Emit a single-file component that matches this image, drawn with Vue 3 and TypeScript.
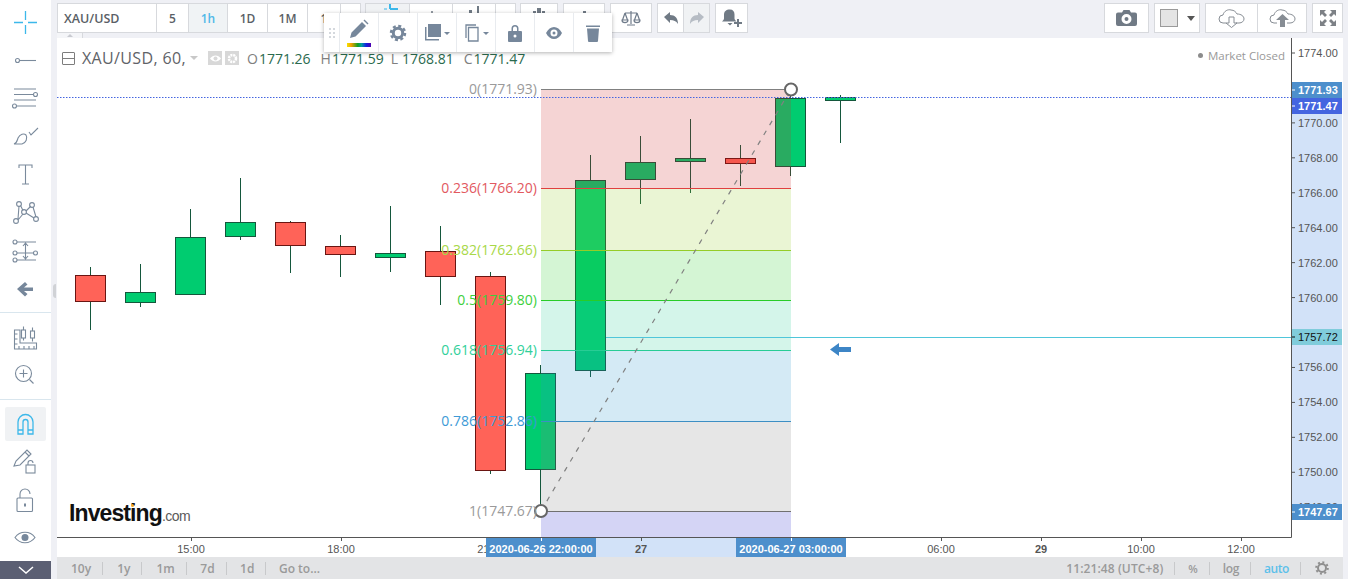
<script setup lang="ts">
interface Candle { x: number; top: number; bottom: number; hi: number; lo: number; up: boolean }
const candles: Candle[] = [
  { x: 90, top: 275, bottom: 301, hi: 267, lo: 330, up: false },
  { x: 140, top: 292, bottom: 302, hi: 264, lo: 307, up: true },
  { x: 190, top: 237, bottom: 294, hi: 209, lo: 295, up: true },
  { x: 240, top: 222, bottom: 236, hi: 178, lo: 240, up: true },
  { x: 290, top: 222, bottom: 245, hi: 221, lo: 273, up: false },
  { x: 340, top: 246, bottom: 254, hi: 235, lo: 277, up: false },
  { x: 390, top: 253, bottom: 257, hi: 206, lo: 272, up: true },
  { x: 440, top: 251, bottom: 276, hi: 226, lo: 305, up: false },
  { x: 490, top: 276, bottom: 470, hi: 272, lo: 474, up: false },
  { x: 540, top: 373, bottom: 469, hi: 365, lo: 505, up: true },
  { x: 590, top: 180, bottom: 370, hi: 155, lo: 377, up: true },
  { x: 640, top: 162, bottom: 179, hi: 136, lo: 204, up: true },
  { x: 690, top: 158, bottom: 161, hi: 119, lo: 193, up: true },
  { x: 740, top: 158, bottom: 163, hi: 145, lo: 186, up: false },
  { x: 790, top: 98, bottom: 166, hi: 91, lo: 176, up: true },
  { x: 840, top: 97, bottom: 100, hi: 95, lo: 143, up: true },
]
const bands = [
  { y: 89, h: 99, c: '#cc2828' },
  { y: 188, h: 62, c: '#95cc28' },
  { y: 250, h: 50, c: '#28cc28' },
  { y: 300, h: 50, c: '#28cc95' },
  { y: 350, h: 71, c: '#2895cc' },
  { y: 421, h: 90, c: '#808080' },
  { y: 511, h: 26, c: '#2828cc' },
]
const fibLevels = [
  { y: 89, line: '#808080', color: '#9a9a9a', text: '0(1771.93)' },
  { y: 188, line: '#e04040', color: '#e2595f', text: '0.236(1766.20)' },
  { y: 250, line: '#95cc28', color: '#a8d848', text: '0.382(1762.66)' },
  { y: 300, line: '#28cc28', color: '#3dd03d', text: '0.5(1759.80)' },
  { y: 350, line: '#28cc95', color: '#30d09a', text: '0.618(1756.94)' },
  { y: 421, line: '#3d8fc4', color: '#3d9ad6', text: '0.786(1752.86)' },
  { y: 511, line: '#707070', color: '#9a9a9a', text: '1(1747.67)' },
]
const priceTicks = [1774, 1772, 1770, 1768, 1766, 1764, 1762, 1760, 1758, 1756, 1754, 1752, 1750, 1748].map((p) => ({
  y: 53 + (1774 - p) * 17.47,
  text: p.toFixed(2),
}))
const timeTicks = [
  { x: 191, text: '15:00', bold: false },
  { x: 341, text: '18:00', bold: false },
  { x: 491, text: '21:00', bold: false },
  { x: 641, text: '27', bold: true },
  { x: 941, text: '06:00', bold: false },
  { x: 1041, text: '29', bold: true },
  { x: 1141, text: '10:00', bold: false },
  { x: 1241, text: '12:00', bold: false },
]
const priceTags = [
  { y: 82, h: 16, bg: '#4d8fcc', fg: '#fff', bold: true, text: '1771.93' },
  { y: 98, h: 16, bg: '#4465e0', fg: '#fff', bold: true, text: '1771.47' },
  { y: 329, h: 16, bg: '#80ccdb', fg: '#111', bold: false, text: '1757.72' },
  { y: 504, h: 16, bg: '#4d8fcc', fg: '#fff', bold: true, text: '1747.67' },
]
const ranges = ['10y', '1y', '1m', '7d', '1d']
const intervals = [
  { label: '5', w: 32, active: false },
  { label: '1h', w: 39, active: true },
  { label: '1D', w: 40, active: false },
  { label: '1M', w: 40, active: false },
  { label: '1', w: 33, active: false },
  { label: '', w: 19, active: false },
]
</script>

<template>
  <div class="app">
    <aside class="sidebar">
      <section class="tool-group">
        <svg class="tool cross" viewBox="0 0 51 38"><path d="M14 22.500h9M28 22.500h9M25.500 11v9M25.500 25v9" /></svg>
        <svg class="tool" viewBox="0 0 51 38"><circle cx="17.500" cy="22.500" r="2" /><path d="M20 22.500h16" /></svg>
        <svg class="tool" viewBox="0 0 51 38"><path d="M14 13h22M14 18.500h19M14 24h22M17 30h19" /><circle cx="35.500" cy="18.500" r="2" /><circle cx="14.500" cy="30" r="2" /></svg>
        <svg class="tool" viewBox="0 0 51 38"><path d="M14 30c3-1 3-3 4-6 2-4 6-5 8-3 2 3 0 8-4 9z M14 30h8M29 18l2 3 7-7" /></svg>
        <svg class="tool" viewBox="0 0 51 38"><path d="M19 16v-3h13v3M25.500 13v19M22 32h7" /></svg>
        <svg class="tool" viewBox="0 0 51 38"><circle cx="19" cy="14" r="2.400" /><circle cx="32" cy="15" r="2.400" /><circle cx="16" cy="31" r="2.400" /><circle cx="36" cy="29" r="2.400" /><circle cx="24" cy="22" r="2.400" /><path d="M18 29l1-13M20.500 15.500l2.500 5M26 21l5-5M33 17l3 10M18 30l5-6M26 23l8 5" /></svg>
        <svg class="tool" viewBox="0 0 51 38"><path d="M17 14h19M17 25h16M17 32h19M25.500 15v16M23 18l2.500-3 2.500 3M23 28l2.500 3 2.500-3" /><circle cx="15" cy="14" r="2" /><circle cx="15" cy="25" r="2" /><circle cx="15" cy="32" r="2" /><circle cx="35.500" cy="25" r="2" /></svg>
        <svg class="tool" viewBox="0 0 51 38"><path class="solid" d="M17 23l8-7 2.500 2.500-3.500 3h9v3.500h-9l3.500 3-2.500 2.500z" /></svg>
      </section>
      <section class="tool-group ruled first-rule">
        <svg class="tool" viewBox="0 0 51 38"><path d="M14.500 12v19h22v-6H20V12zM19 31v-3M24 31v-3M29 31v-3M34 31v-3M14.500 26h3M14.500 21h3M14.500 16h3" /><rect x="21.500" y="12" width="4" height="8" /><path d="M23.500 8.500V12M23.500 20v2.500" /><rect x="30.500" y="13" width="4" height="7" /><path d="M32.500 9.500V13M32.500 20v3.500" /></svg>
        <svg class="tool" viewBox="0 0 51 38"><circle cx="23.500" cy="17.500" r="8" /><path d="M29.500 23.500l4 4M19.500 17.500h8M23.500 13.500v8" /></svg>
      </section>
      <section class="tool-group ruled second-rule">
        <div class="tool-active">
          <svg viewBox="0 0 51 38" class="tool magnet"><path d="M18 29V17a7.500 7.500 0 0 1 15 0v12h-5V17a2.500 2.500 0 0 0-5 0v12zM18 25h5M28 25h5" /></svg>
        </div>
        <svg class="tool" viewBox="0 0 51 38"><path d="M14 25l2-5 11-11 4 4-11 11zM14 25l6-1M25 11l4 4" /><rect x="26" y="24" width="9" height="8" /><path d="M28 24v-2a2.500 2.500 0 0 1 5 0" /></svg>
        <svg class="tool" viewBox="0 0 51 38"><rect x="17" y="19" width="15.500" height="13.500" rx="1" /><path d="M20 19v-4a5 5 0 0 1 10 0" /><path d="M25 24.500v3" stroke-width="2" /></svg>
        <svg class="tool eye" viewBox="0 0 51 38"><path d="M15 19.500c5-7 15-7 20 0-5 7-15 7-20 0z" /><circle class="solid" cx="25" cy="19.500" r="3.500" /></svg>
      </section>
      <button class="collapse" type="button" aria-label="Collapse">
        <svg width="16" height="9" viewBox="0 0 16 9" fill="none" stroke="#fff" stroke-width="1.500"><path d="M1 1l7 6 7-6" /></svg>
      </button>
      <span class="side-handle"></span>
    </aside>

    <div class="main">
      <header class="topbar">
        <div class="group tight">
          <div class="cell symbol">XAU/USD</div>
          <div v-for="b in intervals" :key="b.w + b.label" class="cell" :class="{ active: b.active }" :style="{ width: b.w + 'px' }">{{ b.label }}</div>
        </div>
        <div class="group tight">
          <div class="cell selected peek" style="width: 44px"><svg width="20" height="16" viewBox="0 0 20 16"><path d="M12 5h14M12 5V0" stroke="#3cb8ea" stroke-width="2" /><path d="M6 5h3" stroke="#3cb8ea" stroke-width="1" /></svg></div>
          <div class="cell peek" style="width: 43px"><svg width="20" height="16" viewBox="0 0 20 16"><circle cx="11" cy="8" r="1" fill="#707a85" /></svg></div>
          <div class="cell peek" style="width: 43px"><svg width="20" height="16" viewBox="0 0 20 16"><path d="M5 6h3v6H5zM13 2h2v10h-2z" fill="#707a85" /></svg></div>
          <div class="cell" style="width: 19px"></div>
        </div>
        <div class="group"><div class="cell peek" style="width: 36px"><svg width="20" height="16" viewBox="0 0 20 16"><path d="M4 7h3v5H4zM8 4h4v8H8zM13 7h3v5h-3z" fill="#707a85" /></svg></div></div>
        <div class="group"><div class="cell peek" style="width: 40px"><svg width="20" height="16" viewBox="0 0 20 16"><path d="M9 7h3v5H9z" fill="#707a85" /></svg></div></div>
        <div class="group">
          <div class="cell" style="width: 40px">
            <svg width="20" height="16" viewBox="0 0 20 16" fill="none" stroke="#6f7b8a" stroke-width="1.200"><path d="M10 1v13M4 3h12M6 15h8M4 3L1.500 10M4 3l2.500 7M16 3l-2.500 7M16 3l2.500 7M1 10c0 3.500 6 3.500 6 0zM13 10c0 3.500 6 3.500 6 0z" /></svg>
          </div>
        </div>
        <div class="group">
          <div class="cell" style="width: 26px"><svg width="16" height="12" viewBox="0 0 16 12"><path d="M1 5l6-5v3c5 0 8 3 8 9-2-3-4-4-8-4v3z" fill="#707a85" /></svg></div>
          <div class="cell selected" style="width: 25px"><svg width="16" height="12" viewBox="0 0 16 12"><path d="M15 5L9 0v3c-5 0-8 3-8 9 2-3 4-4 8-4v3z" fill="#b6bcc4" /></svg></div>
        </div>
        <div class="group">
          <div class="cell" style="width: 31px"><svg width="22" height="20" viewBox="0 0 22 20"><path d="M9 1.500c3 0 4.500 2 4.500 5v4c0 1 1 2 2 3H1c1-1 2-2 2-3v-4c0-3 2-5 6-5z M6.500 15h5l-2.500 2.500z" fill="#707a85" /><path d="M17 11v8M13 15h8" stroke="#707a85" stroke-width="2" /></svg></div>
        </div>
        <div class="spacer"></div>
        <div class="group">
          <div class="cell" style="width: 43px"><svg width="21" height="16" viewBox="0 0 21 16"><path fill="#707a85" fill-rule="evenodd" d="M2 2.500h4L7.500 0h6L15 2.500h4a2 2 0 0 1 2 2V14a2 2 0 0 1-2 2H2a2 2 0 0 1-2-2V4.500a2 2 0 0 1 2-2zM10.500 4a5 5 0 1 0 0 10 5 5 0 0 0 0-10zm0 3a2 2 0 1 1 0 4 2 2 0 0 1 0-4z" /></svg></div>
        </div>
        <div class="group">
          <div class="cell" style="width: 44px; gap: 9px"><span class="swatch"></span><span class="caret"></span></div>
        </div>
        <div class="group">
          <div class="cell" style="width: 52px"><svg width="27" height="20" viewBox="0 0 27 20" fill="none" stroke="#878d94" stroke-width="1"><path d="M8 15H5a4 4 0 0 1 0-8c1-4 5-6 8-5 3 0 5 2 6 4 4 0 7 2 7 5 0 2-2 4-5 4h-3" /><path d="M11 9h5v6h3l-5.500 4.500L8 15h3z" /></svg></div>
          <div class="cell" style="width: 48px"><svg width="27" height="20" viewBox="0 0 27 20"><path d="M8 15H5a4 4 0 0 1 0-8c1-4 5-6 8-5 3 0 5 2 6 4 4 0 7 2 7 5 0 2-2 4-5 4h-3" fill="none" stroke="#878d94" /><path d="M11 19h5v-7h4l-6.500-6L7 12h4z" fill="#878d94" /></svg></div>
        </div>
        <div class="group">
          <div class="cell" style="width: 29px"><svg width="18" height="18" viewBox="0 0 18 18" fill="#7d8186"><path d="M1 1h6L5 3l3 3-2 2-3-3-2 2zM17 1h-6l2 2-3 3 2 2 3-3 2 2zM1 17h6l-2-2 3-3-2-2-3 3-2-2zM17 17h-6l2-2-3-3 2-2 3 3 2-2z" /></svg></div>
        </div>
        <span class="tab"><span class="tab-arrow"></span></span>
      </header>

      <div class="chart">
        <svg class="plot" viewBox="57 38 1286 519" width="1286" height="519">
          <rect x="1292" y="89" width="50" height="422" fill="#d2e2f8" />
          <rect x="541" y="538" width="250" height="19" fill="#d2e2f8" />

          <g v-for="(c, i) in candles" :key="i">
            <path :d="`M${c.x + 0.5} ${c.hi}V${c.lo}`" stroke="#14573c" stroke-width="1" />
            <rect :x="c.x - 14.5" :y="c.top + 0.5" width="30" :height="c.bottom - c.top" :fill="c.up ? '#00cc70' : '#ff6358'" :stroke="c.up ? '#14573c' : '#6a1512'" stroke-width="1" />
          </g>

          <rect v-for="b in bands" :key="b.y" x="541" :y="b.y" width="250" :height="b.h" :fill="b.c" fill-opacity="0.2" />
          <path v-for="l in fibLevels" :key="'l' + l.y" :d="`M541 ${l.y + 0.5}H791`" :stroke="l.line" stroke-width="1" />
          <path d="M606 337H1291" stroke="#4fc6da" stroke-width="1" shape-rendering="crispEdges" />
          <path d="M57 97.500H1291" stroke="#4465e0" stroke-width="1" stroke-dasharray="1.500 1.500" />
          <path d="M541 511L791 89" stroke="#808080" stroke-width="1.200" stroke-dasharray="5 6.500" />
          <circle cx="541" cy="511" r="6" fill="#fff" stroke="#666" stroke-width="2" />
          <circle cx="791" cy="89.500" r="6" fill="#fff" stroke="#666" stroke-width="2" />
          <path d="M830 349.500l9-6.500v4h12v5h-12v4z" fill="#3d85c6" />

          <text v-for="l in fibLevels" :key="'t' + l.y" class="fib" x="537" :y="l.y + 5" text-anchor="end" :fill="l.color">{{ l.text }}</text>

          <path d="M1291.500 38V537.500H57" fill="none" stroke="#555" stroke-width="1" />
          <g v-for="t in priceTicks" :key="t.text">
            <path :d="`M1291 ${t.y}h4`" stroke="#555" />
            <text class="axis" x="1298" :y="t.y + 4" fill="#555">{{ t.text }}</text>
          </g>
          <g v-for="t in timeTicks" :key="t.text">
            <path :d="`M${t.x + 0.5} 537v4`" stroke="#555" />
            <text class="axis" :class="{ bold: t.bold }" :x="t.x" y="553" text-anchor="middle" fill="#555">{{ t.text }}</text>
          </g>

          <g v-for="t in priceTags" :key="t.text">
            <rect x="1292" :y="t.y" width="50" :height="t.h" :fill="t.bg" />
            <path :d="`M1292 ${t.y + 8}h3`" :stroke="t.fg" />
            <text class="axis" :class="{ bold: t.bold }" x="1298" :y="t.y + 12" :fill="t.fg">{{ t.text }}</text>
          </g>
          <rect x="486" y="538" width="110" height="19" fill="#4d8fcc" />
          <rect x="736" y="538" width="110" height="19" fill="#4d8fcc" />
          <path d="M541.500 538v3M791.500 538v3" stroke="#fff" />
          <text class="axis bold" x="541" y="553" text-anchor="middle" fill="#fff">2020-06-26 22:00:00</text>
          <text class="axis bold" x="791" y="553" text-anchor="middle" fill="#fff">2020-06-27 03:00:00</text>
        </svg>

        <div class="legend">
          <span class="minus"></span>
          <span class="title">XAU/USD, 60,</span>
          <span class="drop"></span>
          <span class="mini"><svg width="13" height="13" viewBox="0 0 13 13"><path d="M1 6.500c3-4 8-4 11 0-3 4-8 4-11 0z" fill="#fff" /><circle cx="6.500" cy="6.500" r="2" fill="#d8d8d8" /></svg></span>
          <span class="mini"><svg width="13" height="13" viewBox="0 0 13 13"><circle cx="6.500" cy="6.500" r="3.500" fill="none" stroke="#fff" stroke-width="2.500" stroke-dasharray="2 .8" /></svg></span>
          <span class="ohlc"><i>O</i>1771.26</span>
          <span class="ohlc"><i>H</i>1771.59</span>
          <span class="ohlc low"><i>L</i>1768.81</span>
          <span class="ohlc"><i>C</i>1771.47</span>
        </div>
        <div class="closed"><span class="dot"></span>Market Closed</div>
        <div class="logo"><span class="brand">Investing</span><span class="com">.com</span><span class="spark"></span></div>
      </div>

      <footer class="bottom">
        <span v-for="r in ranges" :key="r" class="range">{{ r }}</span>
        <span class="goto">Go to...</span>
        <span class="spacer"></span>
        <span class="stat clock">11:21:48 (UTC+8)</span>
        <span class="stat pct">%</span>
        <span class="stat narrow">log</span>
        <span class="stat narrow auto">auto</span>
        <span class="gear"><svg width="14" height="14" viewBox="0 0 14 14"><circle cx="7" cy="7" r="4" fill="none" stroke="#8f8f8f" stroke-width="2" /><circle cx="7" cy="7" r="5.800" fill="none" stroke="#8f8f8f" stroke-width="2" stroke-dasharray="2 2.500" /></svg></span>
      </footer>

      <div class="float-bar">
        <div class="handle"><span class="grip"></span></div>
        <div class="fcell pencil">
          <svg width="20" height="20" viewBox="0 0 20 20" fill="#76879b"><path d="M1 19l1.500-5.500L13 3l4 4L6.500 17.500zM14.500 1.500l1-1 4 4-1 1z" /></svg>
          <span class="rainbow"></span>
        </div>
        <div class="fcell"><svg width="18" height="18" viewBox="0 0 18 18"><circle cx="9" cy="9" r="4.700" fill="none" stroke="#76879b" stroke-width="3" /><circle cx="9" cy="9" r="7" fill="none" stroke="#76879b" stroke-width="2.500" stroke-dasharray="3 2.500" /></svg></div>
        <div class="fcell"><svg width="26" height="18" viewBox="0 0 26 18" fill="#76879b"><path d="M4 0h13v13H4z" /><path d="M1 3h1.500v12H15v1.500H1z" /><path d="M20 8h6l-3 3z" /></svg></div>
        <div class="fcell"><svg width="26" height="18" viewBox="0 0 26 18" fill="none" stroke="#76879b" stroke-width="1.300"><path d="M3 14V1h10M5.500 3.500h9.500V17H5.500z" /><path d="M20 8h6l-3 3z" fill="#76879b" stroke="none" /></svg></div>
        <div class="fcell"><svg width="14" height="18" viewBox="0 0 14 18"><path fill="#76879b" fill-rule="evenodd" d="M3.500 7V4.500a3.500 3.500 0 0 1 7 0V7H13a1 1 0 0 1 1 1v9a1 1 0 0 1-1 1H1a1 1 0 0 1-1-1V8a1 1 0 0 1 1-1zM5 7h4V4.500a2 2 0 0 0-4 0zm2 3.500a1.500 1.500 0 1 0 0 3 1.500 1.500 0 0 0 0-3z" /></svg></div>
        <div class="fcell"><svg width="16" height="12" viewBox="0 0 16 12"><path fill="#76879b" fill-rule="evenodd" d="M0 6c4-8 12-8 16 0-4 8-12 8-16 0zm8-3.500a3.500 3.500 0 1 0 0 7 3.500 3.500 0 0 0 0-7zM8 4.500a1.500 1.500 0 1 1 0 3 1.500 1.500 0 0 1 0-3z" /></svg></div>
        <div class="fcell"><svg width="14" height="18" viewBox="0 0 14 18" fill="#76879b"><path d="M0 1.500h14V3H0zM1 4.500h12L12 17a1 1 0 0 1-1 1H3a1 1 0 0 1-1-1z" /></svg></div>
      </div>
    </div>
  </div>
</template>

<style scoped>
.app {
  display: flex;
  width: 1348px;
  height: 579px;
  overflow: hidden;
  background: #eff0f5;
  font-family: "Open Sans", "Liberation Sans", sans-serif;
}
.sidebar {
  position: relative;
  flex: none;
  width: 51px;
  margin-right: 6px;
  background: #fff;
}
.tool-group { display: flex; flex-direction: column; }
.tool-group.ruled { border-top: 1px solid #d9e6ee; }
.first-rule { margin-top: 8px; padding-top: 5px; }
.second-rule { margin-top: 5px; padding-top: 7px; }
.tool {
  display: block;
  width: 51px;
  height: 38px;
  fill: none;
  stroke: #7a8a9c;
  stroke-width: 1.100;
  flex: none;
}
.tool .solid { fill: #76879b; stroke: none; }
.tool.cross { stroke: #3cb8ea; stroke-width: 1.300; }
.tool.eye { margin-top: 1px; }
.tool-active {
  margin: 0 5px;
  height: 34px;
  background: #f0f2f4;
  border-radius: 2px;
  display: flex;
  align-items: center;
  justify-content: center;
}
.tool.magnet { stroke: #3cb8ea; stroke-width: 1.300; }
.collapse {
  position: absolute;
  left: 0;
  bottom: 0;
  width: 51px;
  height: 18px;
  border: 0;
  padding: 0;
  background: #5b5f73;
  display: flex;
  align-items: center;
  justify-content: center;
}
.side-handle {
  position: absolute;
  left: 53px;
  top: 284px;
  width: 3px;
  height: 14px;
  background: #d0d2d6;
  border-radius: 3px 0 0 3px;
}
.main {
  position: relative;
  flex: none;
  width: 1286px;
  display: flex;
  flex-direction: column;
}
.topbar {
  position: relative;
  display: flex;
  gap: 5px;
  height: 38px;
  padding-top: 3px;
  box-sizing: border-box;
}
.group {
  display: flex;
  height: 30px;
  box-sizing: border-box;
  border: 1px solid #d7d9dd;
  background: #fff;
  flex: none;
}
.group.tight { margin-right: -1px; }
.cell {
  display: flex;
  align-items: center;
  justify-content: center;
  height: 28px;
  box-sizing: border-box;
  border-right: 1px solid #d7d9dd;
  font-size: 12px;
  font-weight: 600;
  color: #5a5f66;
}
.cell:last-child { border-right: 0; }
.cell.peek { align-items: flex-start; }
.cell.symbol { width: 99px; justify-content: flex-start; padding-left: 6px; font-size: 12.500px; }
.cell.active { background: #f0f3f5; color: #4fb8e8; }
.cell.selected { background: #f0f2f4; }
.swatch { width: 16px; height: 16px; background: #e4e4e4; border: 1px solid #9a9a9a; }
.caret { width: 0; height: 0; border: 4px solid transparent; border-top: 5px solid #555; border-bottom: 0; }
.spacer { flex: 1; }
.tab {
  position: absolute;
  left: 0;
  top: 33px;
  width: 25px;
  height: 5px;
  background: #f4f5f8;
  border-right: 1px solid #d7d9dd;
  display: flex;
  justify-content: center;
}
.tab-arrow { width: 0; height: 0; border: 3px solid transparent; border-bottom: 3px solid #c8cad0; border-top: 0; margin-top: 1px; }
.chart {
  position: relative;
  height: 519px;
  background: #fff;
  flex: none;
}
.plot { display: block; position: absolute; inset: 0; }
.plot .fib { font-family: "Open Sans", sans-serif; font-size: 14px; }
.plot .axis { font-family: "Liberation Sans", Arial, sans-serif; font-size: 11px; }
.plot .axis.bold { font-weight: 700; font-size: 11px; }
.legend {
  position: absolute;
  left: 5px;
  top: 10px;
  display: flex;
  align-items: center;
  height: 20px;
  color: #5f6368;
}
.minus { width: 11px; height: 11px; border: 1px solid #7d7d7d; border-radius: 1px; margin-right: 7px; background: linear-gradient(#7d7d7d, #7d7d7d) center / 100% 1px no-repeat; }
.title { font-size: 16px; letter-spacing: 0.350px; width: 108px; flex: none; white-space: nowrap; }
.drop { width: 0; height: 0; border: 4px solid transparent; border-top: 4px solid #c8c8c8; border-bottom: 0; margin-right: 10px; }
.mini { width: 14px; height: 14px; background: #d8d8d8; margin-right: 3px; display: flex; align-items: center; justify-content: center; }
.ohlc { font-size: 14px; color: #2a6a4e; margin-left: 10px; white-space: nowrap; }
.mini + .ohlc { margin-left: 5px; }
.ohlc i { font-style: normal; color: #808080; margin-right: 1px; }
.ohlc.low { margin-left: 7px; }
.ohlc.low i { margin-right: 4px; }
.closed {
  position: absolute;
  right: 58px;
  top: 10px;
  display: flex;
  align-items: center;
  gap: 5px;
  font-size: 11.500px;
  color: #999;
}
.dot { width: 5px; height: 5px; border-radius: 50%; background: #8c8c8c; }
.logo { position: absolute; left: 12px; top: 462px; display: flex; align-items: baseline; color: #111; }
.brand { font: 700 23px "Liberation Sans", sans-serif; letter-spacing: -0.900px; }
.com { font: 400 14px "Liberation Sans", sans-serif; color: #5a5a5a; letter-spacing: -0.500px; }
.spark { position: absolute; left: 62px; top: 4px; width: 3px; height: 3px; background: #f5a623; border-radius: 50%; }
.bottom {
  display: flex;
  align-items: center;
  height: 22px;
  flex: none;
  background: #e3e4e6;
  font-size: 12px;
  font-weight: 600;
  color: #9a9a9a;
  padding-left: 3px;
}
.range { padding: 0 11px; border-right: 1px solid #c8c9cb; height: 13px; line-height: 13px; margin-right: 3px; }
.range:nth-child(n + 3) { margin-right: 2.500px; }
.goto { padding-left: 10px; }
.stat { padding: 0 11px 0 13px; border-right: 1px solid #c8c9cb; height: 13px; line-height: 13px; }
.stat.clock { letter-spacing: 0.100px; }
.stat.pct { font-size: 11px; }
.stat.narrow { letter-spacing: -0.400px; }
.stat.auto { color: #5cc0ea; }
.gear { display: flex; width: 42px; justify-content: center; }
.float-bar {
  position: absolute;
  left: 267px;
  top: 13px;
  display: flex;
  height: 39px;
  background: #fff;
  box-shadow: 0 1px 4px rgba(0, 0, 0, 0.3);
}
.handle {
  width: 15px;
  display: flex;
  align-items: center;
  justify-content: center;
}
.grip {
  width: 8px;
  height: 12px;
  background: radial-gradient(circle, #d4d8dd 1.100px, transparent 1.300px) 0 0 / 4px 4px;
}
.fcell {
  position: relative;
  width: 39px;
  display: flex;
  align-items: center;
  justify-content: center;
  border-left: 1px solid #e8ebef;
  box-sizing: border-box;
}
.pencil svg { margin-top: -7px; }
.rainbow {
  position: absolute;
  left: 7px;
  bottom: 5px;
  width: 24px;
  height: 4px;
  background: linear-gradient(90deg, #f5e400, #f0a000 18%, #10a020 45%, #00a0a0 60%, #1020e0 80%, #5000b0);
}
</style>

<style>
html, body { background: #fff; overflow: hidden; }
</style>
